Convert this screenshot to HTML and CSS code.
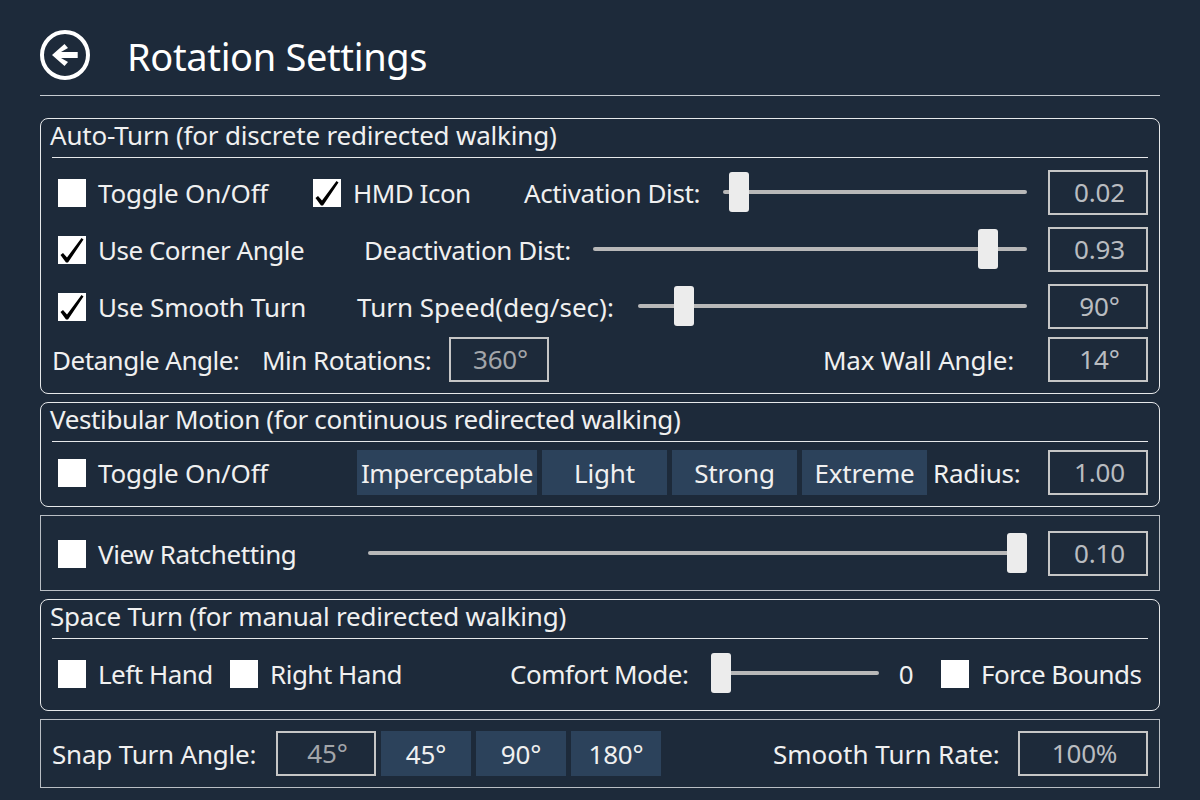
FILE: index.html
```html
<!DOCTYPE html>
<html lang="en">
<head>
    <meta charset="UTF-8">
    <title>Rotation Settings</title>
    <link rel="stylesheet" href="styles.css">
</head>
<body>

<svg width="0" height="0" class="defs">
    <symbol id="tick" viewBox="0 0 28 28">
        <polygon points="2.500,19 5,17 9,21.500 23.500,2 25.500,3.500 10,26.500 8,26.500"></polygon>
    </symbol>
</svg>

<header class="page-header">
    <svg class="back-icon" width="50" height="50" viewBox="0 0 50 50">
        <circle cx="25" cy="25" r="23" fill="none" stroke="#fff" stroke-width="4"></circle>
        <polygon fill="#fff" points="12,25 24.500,14 28,18 21,22 37.700,22 37.700,28 21,28 28,32 24.500,36"></polygon>
    </svg>
    <h1>Rotation Settings</h1>
</header>

<section class="panel rounded">
    <h2>Auto-Turn (for discrete redirected walking)</h2>
    <div class="row indent auto-row1">
        <label class="check"><span class="box"></span>Toggle On/Off</label>
        <label class="check tight"><span class="box"><svg><use href="#tick"></use></svg></span>HMD Icon</label>
        <span class="snug">Activation Dist:</span>
        <input type="range" min="0" max="1" step="0.001" value="0.02">
        <output class="value">0.02</output>
    </div>
    <div class="row indent auto-row2">
        <label class="check tight"><span class="box"><svg><use href="#tick"></use></svg></span>Use Corner Angle</label>
        <span class="snug">Deactivation Dist:</span>
        <input type="range" min="0" max="1" step="0.001" value="0.93">
        <output class="value">0.93</output>
    </div>
    <div class="row indent auto-row3">
        <label class="check"><span class="box"><svg><use href="#tick"></use></svg></span>Use Smooth Turn</label>
        <span class="loose">Turn Speed(deg/sec):</span>
        <input type="range" min="0" max="1" step="0.001" value="0.097">
        <output class="value">90°</output>
    </div>
    <div class="row auto-row4">
        <span class="tight">Detangle Angle:</span>
        <span class="tight">Min Rotations:</span>
        <output class="value dim">360°</output>
        <span class="to-end">Max Wall Angle:</span>
        <output class="value">14°</output>
    </div>
</section>

<section class="panel rounded">
    <h2 class="snug">Vestibular Motion (for continuous redirected walking)</h2>
    <div class="row indent vestibular-row">
        <label class="check"><span class="box"></span>Toggle On/Off</label>
        <div class="btn-group">
            <button class="wide tight">Imperceptable</button>
            <button>Light</button>
            <button>Strong</button>
            <button>Extreme</button>
        </div>
        <span>Radius:</span>
        <output class="value">1.00</output>
    </div>
</section>

<section class="panel ratchet-panel">
    <div class="row indent ratchet-row">
        <label class="check snug"><span class="box"></span>View Ratchetting</label>
        <input type="range" min="0" max="1" step="0.01" value="1">
        <output class="value">0.10</output>
    </div>
</section>

<section class="panel rounded">
    <h2>Space Turn (for manual redirected walking)</h2>
    <div class="row indent space-row">
        <label class="check tight"><span class="box"></span>Left Hand</label>
        <label class="check tight"><span class="box"></span>Right Hand</label>
        <span class="tight">Comfort Mode:</span>
        <input type="range" min="0" max="5" step="1" value="0">
        <span class="zero">0</span>
        <label class="check tight"><span class="box"></span>Force Bounds</label>
    </div>
</section>

<section class="panel snap-panel">
    <div class="row snap-row">
        <span>Snap Turn Angle:</span>
        <output class="value dim">45°</output>
        <div class="btn-group">
            <button class="small">45°</button>
            <button class="small">90°</button>
            <button class="small">180°</button>
        </div>
        <span class="loose">Smooth Turn Rate:</span>
        <output class="value wide-value">100%</output>
    </div>
</section>

</body>
</html>
```

FILE: styles.css
```css
* {
    box-sizing: border-box;
}
body {
    margin: 0;
    padding: 0 40px;
    background-color: #1d2a3a;
    color: #f0f0f0;
    font-family: "Noto Sans", sans-serif;
    font-size: 26px;
    letter-spacing: -0.2px;
}
.tight {
    letter-spacing: -0.5px;
}
.snug {
    letter-spacing: -0.38px;
}
.loose {
    letter-spacing: 0;
}
.defs {
    position: absolute;
}
.page-header {
    display: flex;
    align-items: center;
    gap: 37px;
    height: 96px;
    padding-top: 14px;
    margin-bottom: 22px;
    border-bottom: 1px solid #c6ccd2;
}
.page-header h1 {
    margin: 2px 0 0;
    font-size: 38px;
    font-weight: 400;
    color: #fff;
    letter-spacing: -0.35px;
}
.panel {
    display: flex;
    flex-direction: column;
    padding: 0 11px;
    margin-bottom: 8px;
    border: 1px solid #b9bec4;
}
.panel.rounded {
    border-color: #e6e8ea;
    border-radius: 8px;
}
.panel h2 {
    margin: 0 0 12px;
    height: 39px;
    line-height: 32px;
    font-size: 26px;
    font-weight: 400;
    text-indent: -2px;
    border-bottom: 1px solid #e6e8ea;
}
.row {
    display: grid;
    align-items: center;
    height: 45px;
    margin-bottom: 12px;
}
.row.indent {
    padding-left: 6px;
}
.auto-row1 {
    grid-template-columns: 255px 211px 199px 304px 1fr;
}
.auto-row2 {
    grid-template-columns: 306px 229px 434px 1fr;
}
.auto-row3 {
    grid-template-columns: 299px 281px 389px 1fr;
}
.auto-row4 {
    grid-template-columns: 210px 187px 100px 465px 1fr;
    margin-top: -4px;
    margin-bottom: 11px;
}
.to-end {
    justify-self: end;
}
.vestibular-row {
    grid-template-columns: 299px 576px 1fr 100px;
    margin-top: -4px;
    margin-bottom: 11px;
}
.ratchet-panel {
    padding-top: 15px;
}
.ratchet-panel .row {
    margin-bottom: 14px;
}
.ratchet-row {
    grid-template-columns: 310px 659px 1fr;
}
.space-row {
    grid-template-columns: 172px 280px 201px 168px 62px 1fr;
    margin-bottom: 14px;
}
.snap-panel {
    padding-top: 11px;
}
.snap-panel .row {
    margin-bottom: 11px;
}
.snap-row {
    grid-template-columns: 224px 105px 392px 245px 1fr;
}

.check {
    display: flex;
    align-items: center;
    gap: 12px;
    white-space: nowrap;
}
.box {
    flex: none;
    width: 28px;
    height: 28px;
    background-color: #fff;
}
.box svg {
    display: block;
    width: 28px;
    height: 28px;
    fill: #000;
}

.value {
    justify-self: end;
    width: 100px;
    height: 45px;
    padding-left: 3px;
    line-height: 41px;
    text-align: center;
    border: 2px solid #c6c6c6;
    color: #b9bcc0;
}
.value.dim {
    color: #a3a6aa;
}
.auto-row4 .value.dim,
.snap-row .value.dim {
    justify-self: start;
}
.snap-row .wide-value {
    justify-self: end;
    width: 130px;
}

.btn-group {
    display: flex;
    gap: 5px;
}
button {
    width: 125px;
    height: 45px;
    padding: 0;
    border: none;
    background-color: #2c425b;
    color: #f0f0f0;
    font: inherit;
    letter-spacing: inherit;
}
button.wide {
    width: 180px;
}
button.small {
    width: 90px;
}

.zero {
    text-align: center;
    padding-right: 8px;
}

input[type="range"] {
    -webkit-appearance: none;
    appearance: none;
    display: block;
    width: 100%;
    height: 40px;
    margin: 0 0 1px;
    background: transparent;
}
input[type="range"]::-webkit-slider-runnable-track {
    height: 4px;
    border-radius: 2px;
    background-color: #b8b8b8;
}
input[type="range"]::-webkit-slider-thumb {
    -webkit-appearance: none;
    width: 20px;
    height: 40px;
    margin-top: -18px;
    border-radius: 3px;
    background-color: #ececec;
}
```
